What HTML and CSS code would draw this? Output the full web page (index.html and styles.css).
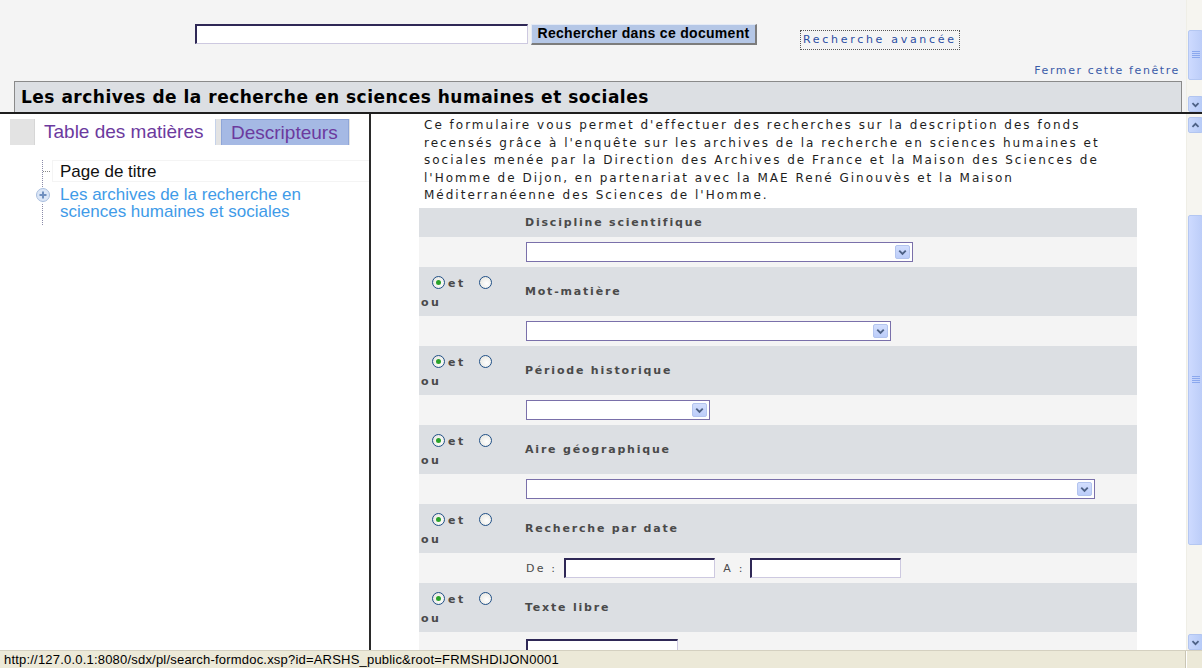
FILE: index.html
```html
<!DOCTYPE html>
<html lang="fr">
<head>
<meta charset="utf-8">
<title>Les archives de la recherche en sciences humaines et sociales</title>
<link rel="stylesheet" href="styles.css">
</head>
<body>
<div class="window">

  <!-- upper frame: quick search and document title -->
  <div class="topframe">
    <div class="topframe-body">
      <div class="quick-search">
        <span class="text-field search-field"></span>
        <span class="btn">Rechercher dans ce document</span>
        <a class="adv-link">Recherche avancée</a>
      </div>
      <div class="close-row"><a class="close-link">Fermer cette fenêtre</a></div>
      <h1 class="doc-title">Les archives de la recherche en sciences humaines et sociales</h1>
    </div>
    <div class="scrollbar top-scroll">
      <div class="sb-track">
        <div class="sb-thumb top-thumb"><span class="grip"></span></div>
      </div>
      <div class="sb-btn">
        <svg viewBox="0 0 15 15" width="15" height="15"><path d="M4 6 L7.5 9.5 L11 6" fill="none" stroke="#4d6185" stroke-width="2"/></svg>
      </div>
    </div>
  </div>

  <div class="frame-split"></div>

  <div class="frames">
    <!-- left frame: table of contents -->
    <aside class="toc-frame">
      <div class="tabs">
        <span class="tab tab-active">Table des matières</span>
        <span class="tab tab-other">Descripteurs</span>
      </div>
      <ul class="tree">
        <li class="tree-row leaf"><span class="twig"></span><span class="node">Page de titre</span></li>
        <li class="tree-row branch">
          <span class="expander">
            <svg viewBox="0 0 16 16" width="16" height="16">
              <circle cx="8" cy="8" r="6.5" fill="#dbe6f7" stroke="#a9bedf"/>
              <path d="M8 4.5 V11.5 M4.5 8 H11.5" stroke="#6f8fbf" stroke-width="2"/>
            </svg>
          </span>
          <a class="node link">Les archives de la recherche en<br>sciences humaines et sociales</a>
        </li>
      </ul>
    </aside>

    <!-- right frame: search form -->
    <main class="form-frame">
      <div class="form-body">
        <p class="intro">Ce formulaire vous permet d'effectuer des recherches sur la description des fonds<br>recensés grâce à l'enquête sur les archives de la recherche en sciences humaines et<br>sociales menée par la Direction des Archives de France et la Maison des Sciences de<br>l'Homme de Dijon, en partenariat avec la MAE René Ginouvès et la Maison<br>Méditerranéenne des Sciences de l'Homme.</p>

        <table class="criteria">
          <tr class="hd hd-first">
            <td class="op"></td>
            <td class="label">Discipline scientifique</td>
          </tr>
          <tr class="fd">
            <td class="op"></td>
            <td><span class="select" style="width:387px"><span class="drop"><svg viewBox="0 0 14 13" width="14" height="13"><path d="M3.5 4.5 L7 8 L10.5 4.5" fill="none" stroke="#4d6185" stroke-width="2"/></svg></span></span></td>
          </tr>

          <tr class="hd">
            <td class="op"><span class="radio on"></span><span class="opt">et</span><span class="radio"></span><br><span class="opt">ou</span></td>
            <td class="label">Mot-matière</td>
          </tr>
          <tr class="fd">
            <td class="op"></td>
            <td><span class="select" style="width:365px"><span class="drop"><svg viewBox="0 0 14 13" width="14" height="13"><path d="M3.5 4.5 L7 8 L10.5 4.5" fill="none" stroke="#4d6185" stroke-width="2"/></svg></span></span></td>
          </tr>

          <tr class="hd">
            <td class="op"><span class="radio on"></span><span class="opt">et</span><span class="radio"></span><br><span class="opt">ou</span></td>
            <td class="label">Période historique</td>
          </tr>
          <tr class="fd">
            <td class="op"></td>
            <td><span class="select" style="width:184px"><span class="drop"><svg viewBox="0 0 14 13" width="14" height="13"><path d="M3.5 4.5 L7 8 L10.5 4.5" fill="none" stroke="#4d6185" stroke-width="2"/></svg></span></span></td>
          </tr>

          <tr class="hd">
            <td class="op"><span class="radio on"></span><span class="opt">et</span><span class="radio"></span><br><span class="opt">ou</span></td>
            <td class="label">Aire géographique</td>
          </tr>
          <tr class="fd">
            <td class="op"></td>
            <td><span class="select" style="width:569px"><span class="drop"><svg viewBox="0 0 14 13" width="14" height="13"><path d="M3.5 4.5 L7 8 L10.5 4.5" fill="none" stroke="#4d6185" stroke-width="2"/></svg></span></span></td>
          </tr>

          <tr class="hd">
            <td class="op"><span class="radio on"></span><span class="opt">et</span><span class="radio"></span><br><span class="opt">ou</span></td>
            <td class="label">Recherche par date</td>
          </tr>
          <tr class="fd">
            <td class="op"></td>
            <td><span class="small">De :</span><span class="text-field date-field"></span><span class="small">A :</span><span class="text-field date-field"></span></td>
          </tr>

          <tr class="hd">
            <td class="op"><span class="radio on"></span><span class="opt">et</span><span class="radio"></span><br><span class="opt">ou</span></td>
            <td class="label">Texte libre</td>
          </tr>
          <tr class="fd">
            <td class="op"></td>
            <td><span class="text-field free-field"></span></td>
          </tr>
        </table>
      </div>

      <div class="scrollbar form-scroll">
        <div class="sb-btn">
          <svg viewBox="0 0 15 15" width="15" height="15"><path d="M4 9 L7.5 5.5 L11 9" fill="none" stroke="#4d6185" stroke-width="2"/></svg>
        </div>
        <div class="sb-track">
          <div class="sb-thumb form-thumb">
            <span class="grip"></span>
          </div>
        </div>
        <div class="sb-btn">
          <svg viewBox="0 0 15 15" width="15" height="15"><path d="M4 6 L7.5 9.5 L11 6" fill="none" stroke="#4d6185" stroke-width="2"/></svg>
        </div>
      </div>
    </main>
  </div>

  <!-- browser status bar -->
  <div class="statusbar">
    <span class="status-url">http://127.0.0.1:8080/sdx/pl/search-formdoc.xsp?id=ARSHS_public&amp;root=FRMSHDIJON0001</span>
    <span class="status-zone"></span>
    <span class="status-grip"></span>
  </div>
</div>
</body>
</html>
```

FILE: styles.css
```css
* {
  box-sizing: border-box;
}

html, body {
  margin: 0;
  padding: 0;
  background: #ffffff;
}

body {
  font-family: "DejaVu Sans", Verdana, sans-serif;
  color: #222;
}

.window {
  width: 1202px;
  height: 668px;
  overflow: hidden;
  display: flex;
  flex-direction: column;
}

/* ---------- upper frame ---------- */
.topframe {
  height: 112px;
  display: flex;
  background: #f4f4f4;
}

.topframe-body {
  flex: 1;
  display: flex;
  flex-direction: column;
}

.quick-search {
  display: flex;
  align-items: flex-start;
  padding: 24px 0 0 195px;
  height: 52px;
}

.text-field {
  display: inline-block;
  background: #fff;
  border-style: solid;
  border-width: 2px 1px 1px 2px;
  border-color: #2f2856 #cdc9e0 #cdc9e0 #2f2856;
  height: 20px;
}

.search-field {
  width: 333px;
}

.btn {
  margin-left: 3px;
  width: 226px;
  height: 21px;
  background: #b5c7e6;
  border-style: solid;
  border-width: 1px 2px 2px 1px;
  border-color: #e4eaf5 #7c7c7c #7c7c7c #e4eaf5;
  font-family: "Liberation Sans", Arial, sans-serif;
  font-weight: bold;
  font-size: 14px;
  letter-spacing: 0.3px;
  line-height: 17px;
  text-align: center;
  color: #000;
}

.adv-link {
  margin: 6px 0 0 43px;
  padding: 2px 2px 2px 2px;
  border: 1px dotted #555;
  font-size: 11px;
  letter-spacing: 2.7px;
  line-height: 14px;
  color: #2b4ea3;
}

.close-row {
  display: flex;
  justify-content: flex-end;
  align-items: flex-end;
  padding: 0 6px 0 0;
  height: 29px;
}

.close-link {
  font-size: 11px;
  letter-spacing: 1.6px;
  line-height: 14px;
  color: #3a5ba8;
  margin-bottom: 3px;
}

.doc-title {
  margin: 0 4px 0 14px;
  height: 31px;
  background: #dcdfe3;
  border: 1px solid #8a8a8a;
  border-bottom: none;
  font-size: 17px;
  font-weight: bold;
  line-height: 31px;
  padding-left: 6px;
  color: #000;
  letter-spacing: 0.5px;
  white-space: nowrap;
}

/* ---------- XP style scrollbars ---------- */
.scrollbar {
  width: 16px;
  display: flex;
  flex-direction: column;
  background: #f6f5f0;
  border-left: 1px solid #efeee6;
}

.sb-btn {
  height: 16px;
  width: 15px;
  margin-left: 1px;
  background: linear-gradient(to right, #c9d8fc, #b7cbf7);
  border: 1px solid #b2c5f0;
  border-radius: 2px;
  display: flex;
  align-items: center;
  justify-content: center;
}

.sb-track {
  flex: 1;
  display: flex;
  flex-direction: column;
}

.sb-thumb {
  margin-left: 1px;
  width: 15px;
  background: linear-gradient(to right, #cddaff, #bccdf8);
  border: 1px solid #b4c7f2;
  border-radius: 2px;
  display: flex;
  align-items: center;
  justify-content: center;
}

.top-thumb {
  margin-top: 30px;
  height: 50px;
}

.form-thumb {
  margin-top: 82px;
  height: 330px;
}

.grip {
  width: 8px;
  height: 8px;
  background: repeating-linear-gradient(to bottom, #8ba8ee 0 1px, transparent 1px 2px);
}

.form-scroll .sb-btn:first-child {
  margin-top: 3px;
}

/* ---------- frame layout ---------- */
.frame-split {
  height: 2px;
  background: #1e1e1e;
}

.frames {
  flex: 1;
  display: flex;
  min-height: 0;
}

.toc-frame {
  width: 371px;
  flex: none;
  background: #fff;
  border-right: 2px solid #2a2a2a;
  padding: 5px 0 0 10px;
}

.tabs {
  display: flex;
  align-items: stretch;
  width: 340px;
  height: 26px;
  background: #e3e3e3;
  padding-left: 24px;
  font-family: "Liberation Sans", Arial, sans-serif;
  font-size: 19px;
  color: #6c3a9e;
}

.tab {
  display: flex;
  align-items: center;
  padding: 0 9px;
  line-height: 20px;
  white-space: nowrap;
}

.tab-active {
  width: 182px;
  background: #fff;
  border-left: 1px solid #d6d6d6;
  border-right: 1px solid #c5d2ea;
}

.tab-other {
  width: 128px;
  margin-left: 5px;
  padding-left: 9px;
  background: #a5b9e4;
  border: 1px solid #8fa6d8;
  border-bottom: none;
}

.tree {
  list-style: none;
  margin: 15px 0 0 32px;
  padding: 0;
  font-family: "Liberation Sans", Arial, sans-serif;
  font-size: 17px;
  line-height: 17px;
  background-image: repeating-linear-gradient(to bottom, #8a8aa8 0 1px, transparent 1px 2px);
  background-repeat: no-repeat;
  background-size: 1px 100%;
  background-position: 0 0;
}

.tree-row {
  display: flex;
  align-items: flex-start;
}

.leaf {
  height: 22px;
  align-items: center;
}

.leaf .node {
  flex: 1;
  align-self: stretch;
  display: flex;
  align-items: center;
  margin-left: -8px;
  padding-left: 7px;
  border: 1px solid #f4f4f4;
  border-right: none;
}

.twig {
  width: 7px;
  height: 1px;
  margin-left: 1px;
  margin-right: 10px;
  background: repeating-linear-gradient(to right, #8a8a8a 0 1px, transparent 1px 2px);
}

.branch {
  margin-left: -7px;
  padding-top: 4px;
  height: 44px;
}

.expander {
  width: 16px;
  height: 16px;
  margin-right: 9px;
  margin-top: 1px;
  flex: none;
  background: #fff;
  border-radius: 50%;
}

.node {
  color: #111;
}

.link {
  color: #3f9be8;
}

/* ---------- search form frame ---------- */
.form-frame {
  flex: 1;
  display: flex;
  min-width: 0;
  background: #fff;
}

.form-body {
  flex: 1;
  padding: 3px 0 0 48px;
  overflow: hidden;
}

.intro {
  margin: 0 0 0 5px;
  font-size: 12px;
  letter-spacing: 2px;
  line-height: 17.6px;
  color: #1e1e1e;
  white-space: nowrap;
}

.criteria {
  margin-top: 3px;
  width: 718px;
  border-collapse: collapse;
}

.criteria td {
  padding: 0;
  vertical-align: middle;
}

.hd {
  background: #dcdfe3;
  height: 49px;
}

.hd-first {
  height: 29px;
}

.fd {
  background: #f4f4f4;
  height: 30px;
}

.op {
  width: 106px;
  padding-left: 2px !important;
  font-size: 11px;
  font-weight: bold;
  letter-spacing: 2.5px;
  line-height: 19px;
  color: #4a4a4a;
}

.hd .op {
  padding-top: 4px !important;
}

.label {
  font-size: 11px;
  font-weight: bold;
  letter-spacing: 1.8px;
  color: #4a4a4a;
}

.radio {
  display: inline-block;
  width: 13px;
  height: 13px;
  border: 1px solid #1f4f86;
  border-radius: 50%;
  background: radial-gradient(circle at 60% 60%, #ffffff, #e3e2da);
  vertical-align: -2px;
  margin-left: 11px;
  margin-right: 3px;
  position: relative;
}

.opt + .radio {
  margin-left: 13px;
}

.radio.on::after {
  content: "";
  position: absolute;
  left: 3px;
  top: 3px;
  width: 5px;
  height: 5px;
  border-radius: 50%;
  background: #2aa22a;
}

.select {
  display: inline-flex;
  justify-content: flex-end;
  align-items: center;
  height: 20px;
  margin-left: 1px;
  background: #fff;
  border: 1px solid #7a70aa;
  padding-right: 2px;
  vertical-align: middle;
}

.drop {
  width: 15px;
  height: 14px;
  background: linear-gradient(#d2defd, #bccdf9);
  border: 1px solid #b3c4ee;
  border-radius: 2px;
  display: flex;
  align-items: center;
  justify-content: center;
}

.small {
  font-size: 11px;
  letter-spacing: 2.2px;
  color: #4a4a4a;
  vertical-align: middle;
}

.small:first-child {
  margin: 0 7px 0 1px;
}

.date-field + .small {
  margin: 0 5px 0 8px;
}

.date-field {
  width: 151px;
  vertical-align: middle;
}

.free-field {
  width: 152px;
  margin-left: 1px;
  margin-top: 5px;
  vertical-align: top;
}

/* ---------- status bar ---------- */
.statusbar {
  height: 18px;
  display: flex;
  background: #ece9d8;
  border-top: 1px solid #d4d0c0;
  font-family: "Liberation Sans", Arial, sans-serif;
  font-size: 13px;
  letter-spacing: 0.2px;
  line-height: 17px;
  color: #000;
}

.status-url {
  flex: 1;
  padding-left: 4px;
  white-space: nowrap;
}

.status-zone {
  width: 16px;
  border-left: 1px solid #c9c5b4;
  box-shadow: inset 1px 0 #fff;
}

.status-grip {
  width: 1px;
}
```
